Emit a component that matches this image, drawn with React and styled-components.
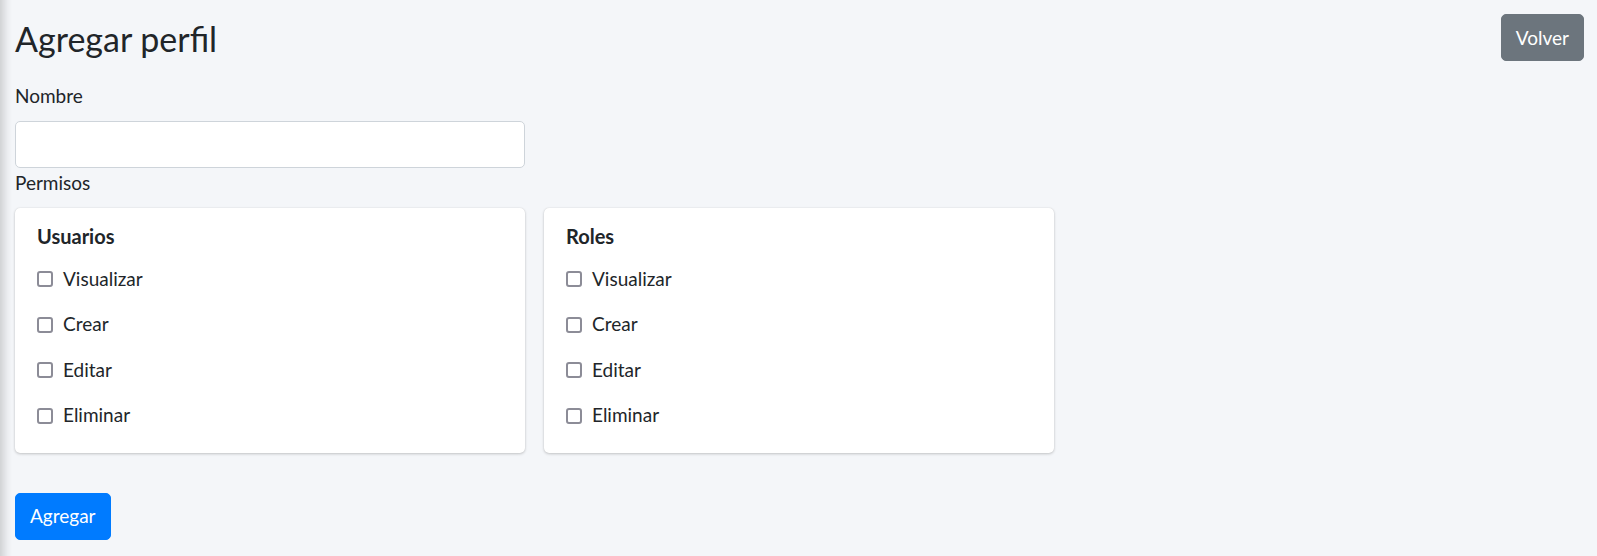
import React from 'react'
import styled, { createGlobalStyle } from 'styled-components'

const GlobalStyle = createGlobalStyle`
  html, body {
    margin: 0;
    padding: 0;
    background: #f4f6f9;
  }
  body {
    font-family: Lato, "Noto Sans", sans-serif;
    color: #212529;
    font-size: 19px;
  }
  * { box-sizing: border-box; }
`

const SideShadow = styled.div`
  position: fixed;
  top: 0;
  left: 0;
  bottom: 0;
  width: 12px;
  pointer-events: none;
  background: linear-gradient(to right, rgba(0, 0, 0, 0.14), rgba(0, 0, 0, 0.04) 60%, rgba(0, 0, 0, 0));
`

const Page = styled.div`
  min-height: 556px;
  padding: 14px 13px 16px 15px;
`

const Header = styled.div`
  display: flex;
  justify-content: space-between;
  align-items: flex-start;
  margin-bottom: 20px;
`

const Title = styled.h1`
  margin: 0;
  padding-top: 2px;
  font-size: 34px;
  font-weight: 400;
  line-height: 45px;
  color: #212529;
`

const Button = styled.button`
  height: 47px;
  padding: 0 14px;
  border: 1px solid ${p => (p.$variant === 'primary' ? '#007bff' : '#6c757d')};
  border-radius: 5px;
  background: ${p => (p.$variant === 'primary' ? '#007bff' : '#6c757d')};
  color: #fff;
  font-family: inherit;
  font-size: 19px;
  line-height: 30px;
  cursor: pointer;
`

const Label = styled.label`
  display: block;
  font-size: 19px;
  line-height: 30px;
  margin-bottom: 10px;
`

const Input = styled.input`
  display: block;
  width: 510px;
  height: 47px;
  padding: 7px 15px;
  border: 1px solid #ced4da;
  border-radius: 5px;
  background: #fff;
  font-family: inherit;
  font-size: 19px;
  outline: none;
`

const Grid = styled.div`
  display: grid;
  grid-template-columns: 510px 510px;
  column-gap: 19px;
`

const Card = styled.div`
  background: #fff;
  border-radius: 5px;
  box-shadow: 0 0 1px rgba(0, 0, 0, 0.125), 0 1px 3px rgba(0, 0, 0, 0.2);
  padding: 13px 22px 23px 22px;
`

const CardTitle = styled.div`
  font-weight: 700;
  font-size: 20px;
  line-height: 30px;
  margin-bottom: 12px;
`

const List = styled.div`
  display: flex;
  flex-direction: column;
  gap: 15.67px;
`

const Row = styled.label`
  display: flex;
  align-items: center;
  height: 30px;
  gap: 10px;
  font-size: 19px;
  cursor: pointer;
`

const Check = styled.input.attrs({ type: 'checkbox' })`
  appearance: none;
  margin: 2px 0 0 0;
  width: 16px;
  height: 16px;
  border: 2px solid #8c8c97;
  border-radius: 3px;
  background: #fff;
  &:checked {
    background: #0075ff;
    border-color: #0075ff;
  }
`

const Footer = styled.div`
  margin-top: 40px;
`

const modules = [
  { name: 'Usuarios', perms: ['Visualizar', 'Crear', 'Editar', 'Eliminar'] },
  { name: 'Roles', perms: ['Visualizar', 'Crear', 'Editar', 'Eliminar'] },
]

export default function App() {
  return (
    <>
      <GlobalStyle />
      <SideShadow />
      <Page>
        <Header>
          <Title>Agregar perfil</Title>
          <Button>Volver</Button>
        </Header>
        <Label htmlFor="nombre">Nombre</Label>
        <Input id="nombre" type="text" />
        <Label>Permisos</Label>
        <Grid>
          {modules.map(m => (
            <Card key={m.name}>
              <CardTitle>{m.name}</CardTitle>
              <List>
                {m.perms.map(p => (
                  <Row key={p}>
                    <Check />
                    {p}
                  </Row>
                ))}
              </List>
            </Card>
          ))}
        </Grid>
        <Footer>
          <Button $variant="primary">Agregar</Button>
        </Footer>
      </Page>
    </>
  )
}
